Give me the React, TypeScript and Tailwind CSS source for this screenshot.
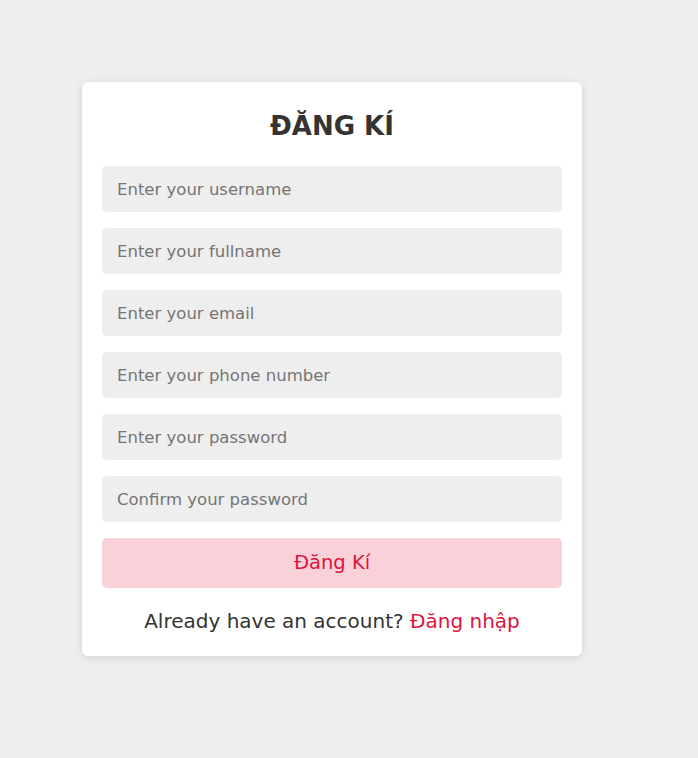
export default function App() {
  const fields = [
    { type: "text", placeholder: "Enter your username" },
    { type: "text", placeholder: "Enter your fullname" },
    { type: "email", placeholder: "Enter your email" },
    { type: "tel", placeholder: "Enter your phone number" },
    { type: "password", placeholder: "Enter your password" },
    { type: "password", placeholder: "Confirm your password" },
  ];

  return (
    <main
      className="min-h-screen bg-[#eeeeee] pt-[82px] pl-[82px]"
      style={{ fontFamily: '"DejaVu Sans", "Open Sans", sans-serif' }}
    >
      <div className="w-[500px] bg-white rounded-md shadow-[0_2px_8px_rgba(0,0,0,0.12)] px-5 pt-5 pb-[21px]">
        {/* Title */}
        <h2 className="text-[26px] leading-[48px] font-bold text-center text-[#333333] mb-4">
          ĐĂNG KÍ
        </h2>

        {/* Fields */}
        <form className="flex flex-col gap-4" onSubmit={(e) => e.preventDefault()}>
          {fields.map((f, i) => (
            <input
              key={i}
              type={f.type}
              placeholder={f.placeholder}
              className="h-[46px] w-full rounded-[5px] bg-[#eeeeee] px-[15px] text-[16.5px] text-[#333] placeholder:text-[#757575] outline-none"
            />
          ))}

          <button
            type="submit"
            className="h-[50px] w-full rounded-[5px] bg-[#fad0d9] text-[crimson] text-[19.5px]"
          >
            Đăng Kí
          </button>
        </form>

        {/* Footer */}
        <p className="mt-5 text-center text-[20px] leading-[27px] text-[#333333]">
          Already have an account?{" "}
          <a href="#" className="text-[crimson]">
            Đăng nhập
          </a>
        </p>
      </div>
    </main>
  );
}
